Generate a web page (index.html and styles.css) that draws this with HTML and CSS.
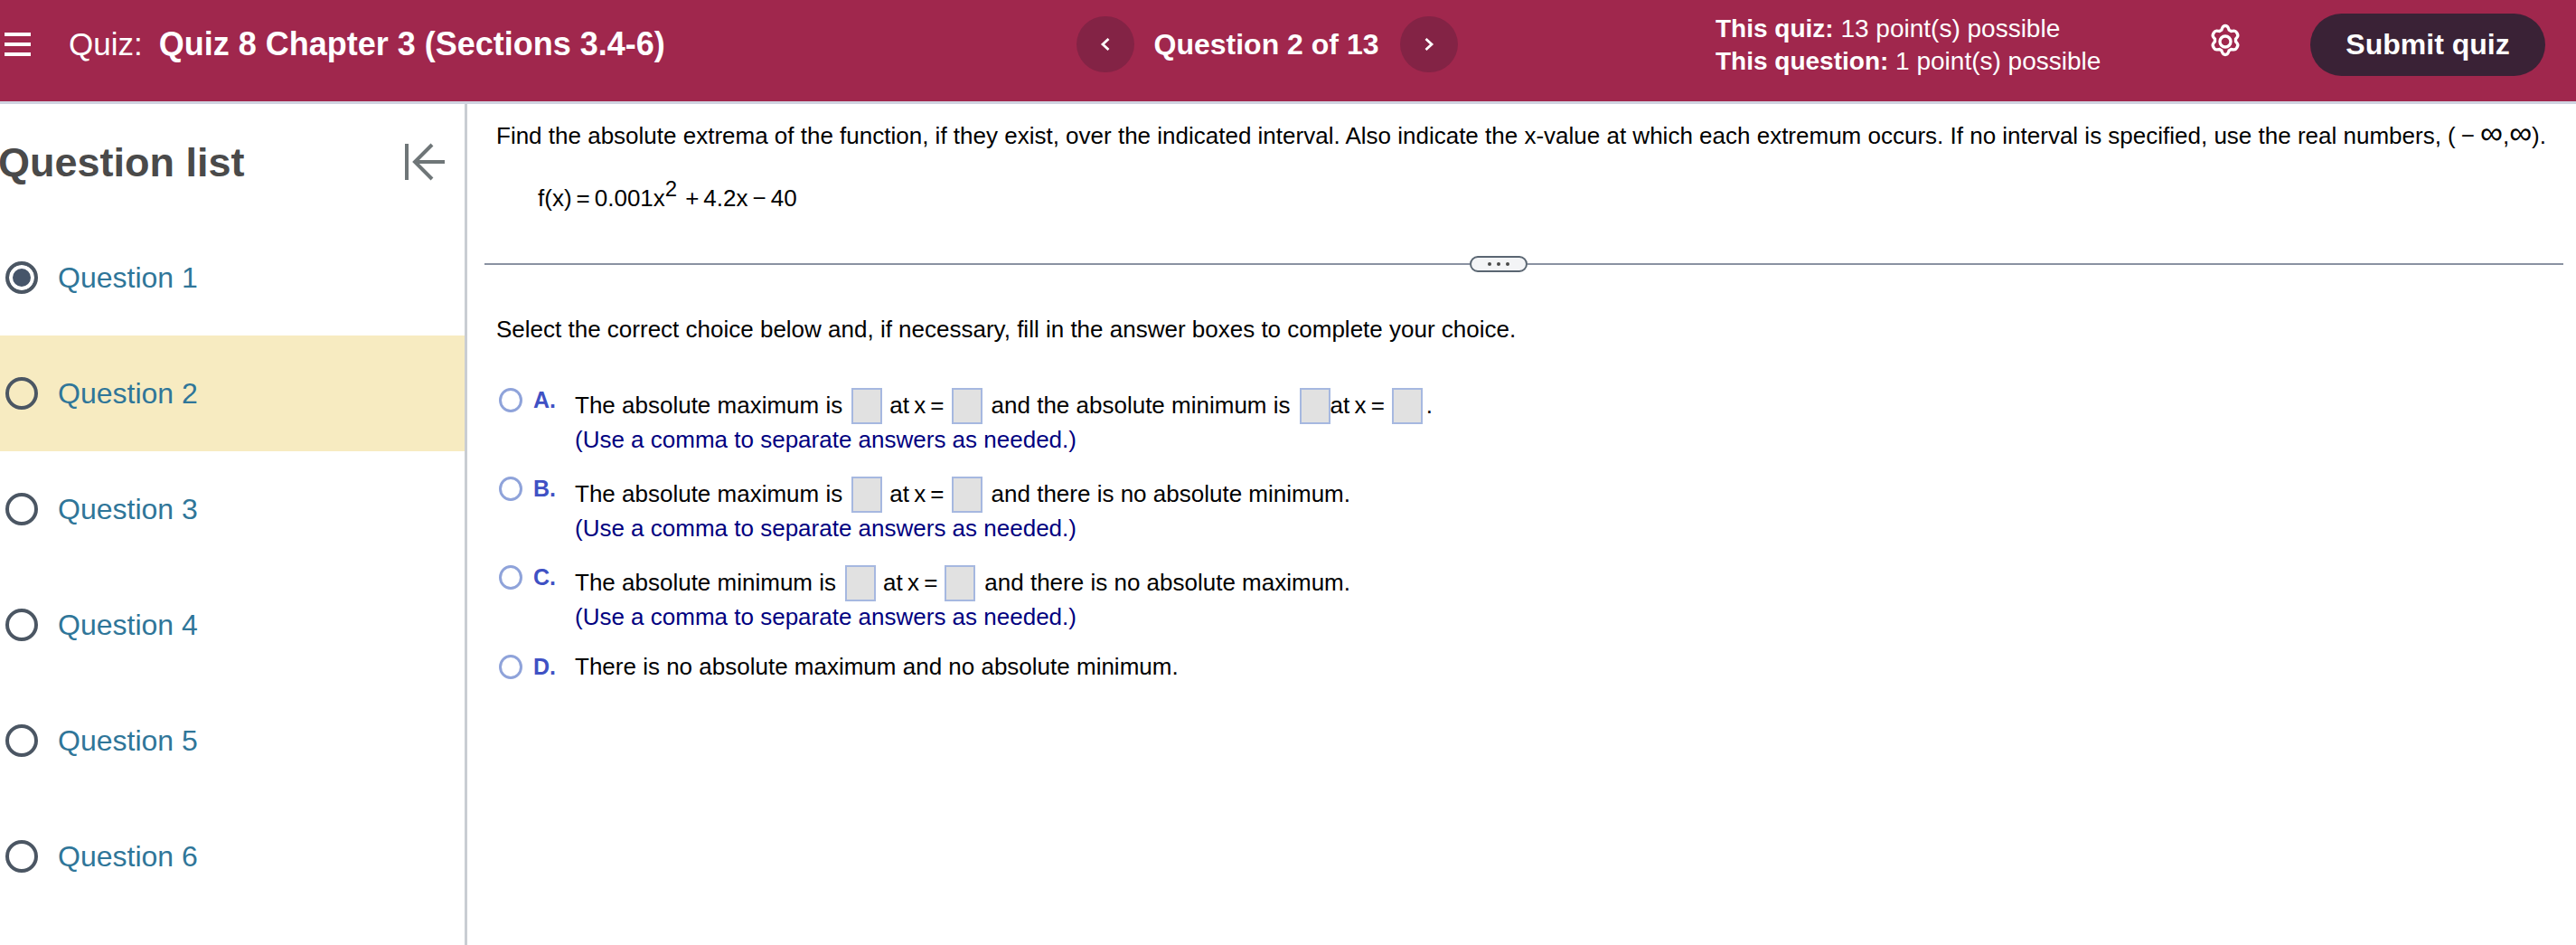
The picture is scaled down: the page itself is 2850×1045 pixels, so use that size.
FILE: index.html
```html
<!DOCTYPE html>
<html>
	<head>
		<meta charset="utf-8">
		<title>Quiz 8 Chapter 3</title>
		<link rel="stylesheet" href="styles.css">
	</head>
	<body>
		<header class="topbar">
			<div class="menu-icon"><span></span><span></span><span></span></div>
			<div class="quiz-title">Quiz:<b>Quiz 8 Chapter 3 (Sections 3.4-6)</b></div>
			<div class="pager">
				<span class="pager-btn">
					<svg width="14" height="18" viewBox="0 0 14 18"><path d="M10.5 3 4 9l6.5 6" fill="none" stroke="#fff" stroke-width="2.8"/></svg>
				</span>
				<span class="pager-text">Question 2 of 13</span>
				<span class="pager-btn">
					<svg width="14" height="18" viewBox="0 0 14 18"><path d="M3.5 3 10 9l-6.5 6" fill="none" stroke="#fff" stroke-width="2.8"/></svg>
				</span>
			</div>
			<div class="points">
				<div><b>This quiz:</b> 13 point(s) possible</div>
				<div><b>This question:</b> 1 point(s) possible</div>
			</div>
			<svg class="gear" width="40" height="40" viewBox="0 0 24 24" fill="none" stroke="#fff" stroke-width="2">
				<circle cx="12" cy="12" r="3.6"/>
				<path d="M12 1.5c1 0 1.6.5 2 1.5l.5 1.3 1.4.8 1.4-.2c1-.2 1.7.2 2.2 1l.5.9c.5.9.4 1.6-.2 2.4l-.9 1.1v1.6l.9 1.1c.6.8.7 1.5.2 2.4l-.5.9c-.5.8-1.2 1.2-2.2 1l-1.4-.2-1.4.8-.5 1.3c-.4 1-1 1.5-2 1.5s-1.6-.5-2-1.5l-.5-1.3-1.4-.8-1.4.2c-1 .2-1.7-.2-2.2-1l-.5-.9c-.5-.9-.4-1.6.2-2.4l.9-1.1v-1.6l-.9-1.1c-.6-.8-.7-1.5-.2-2.4l.5-.9c.5-.8 1.2-1.2 2.2-1l1.4.2 1.4-.8.5-1.3c.4-1 1-1.5 2-1.5z"/>
			</svg>
			<span class="submit-btn">Submit quiz</span>
		</header>

		<div class="content">
			<aside class="sidebar">
				<div class="sidebar-head">
					<h2>Question list</h2>
					<svg width="46" height="42" viewBox="0 0 46 42" fill="none" stroke="#6f7678" stroke-width="4">
						<path d="M3 1v40M45 21H12M31 2 12 21l19 19"/>
					</svg>
				</div>
				<ul class="question-list">
					<li><span class="dot dot-on"></span>Question 1</li>
					<li class="current"><span class="dot"></span>Question 2</li>
					<li><span class="dot"></span>Question 3</li>
					<li><span class="dot"></span>Question 4</li>
					<li><span class="dot"></span>Question 5</li>
					<li><span class="dot"></span>Question 6</li>
				</ul>
			</aside>

			<main class="main">
				<p class="line">Find the absolute extrema of the function, if they exist, over the indicated interval. Also indicate the x-value at which each extremum occurs. If no interval is specified, use the real numbers, <span class="interval">(<i>−</i><span class="inf">∞</span>,<span class="inf">∞</span>).</span></p>
				<p class="line formula">f(x)<i>=</i>0.001x<sup>2</sup><i>+</i>4.2x<i>−</i>40</p>

				<div class="divider">
					<span class="rule rule-left"></span>
					<span class="handle"><em></em><em></em><em></em></span>
					<span class="rule"></span>
				</div>

				<p class="line select">Select the correct choice below and, if necessary, fill in the answer boxes to complete your choice.</p>

				<div class="options">
					<div class="option">
						<span class="radio"></span><span class="letter">A.</span>
						<div>
							<div class="row">
								<span>The absolute maximum is</span><span class="box"></span><span class="atx">at x =</span><span class="box"></span><span>and the absolute minimum is</span><span class="box box-tight"></span><span class="atx">at x =</span><span class="box"></span><span class="stop">.</span>
							</div>
							<div class="hint">(Use a comma to separate answers as needed.)</div>
						</div>
					</div>
					<div class="option">
						<span class="radio"></span><span class="letter">B.</span>
						<div>
							<div class="row">
								<span>The absolute maximum is</span><span class="box"></span><span class="atx">at x =</span><span class="box"></span><span>and there is no absolute minimum.</span>
							</div>
							<div class="hint">(Use a comma to separate answers as needed.)</div>
						</div>
					</div>
					<div class="option">
						<span class="radio"></span><span class="letter">C.</span>
						<div>
							<div class="row">
								<span>The absolute minimum is</span><span class="box"></span><span class="atx">at x =</span><span class="box"></span><span>and there is no absolute maximum.</span>
							</div>
							<div class="hint">(Use a comma to separate answers as needed.)</div>
						</div>
					</div>
					<div class="option option-plain">
						<span class="radio"></span><span class="letter">D.</span>
						<div class="line">There is no absolute maximum and no absolute minimum.</div>
					</div>
				</div>
			</main>
		</div>
	</body>
</html>
```

FILE: styles.css
```css
*{
	margin: 0;
	padding: 0;
	box-sizing: border-box;
}

html, body{
	height: 100%;
	overflow: hidden;
}

body{
	font-family: "Liberation Sans", Arial, sans-serif;
	color: #000;
	background: #fff;
	display: flex;
	flex-direction: column;
}

/************ top bar ************/
.topbar{
	height: 115px;
	flex: none;
	display: flex;
	align-items: center;
	padding: 0 34px 14px 5px;
	background: #a0274d;
	border-bottom: 3px solid #cfd3e0;
	color: #fff;
}

.menu-icon{
	width: 29px;
	height: 26px;
	display: flex;
	flex-direction: column;
	justify-content: space-between;
}

.menu-icon span{
	height: 4px;
	background: #fff;
}

.quiz-title{
	margin-left: 42px;
	width: 1115px;
	font-size: 35px;
	white-space: nowrap;
}

.quiz-title b{
	margin-left: 18px;
	font-size: 36px;
}

.pager{
	width: 422px;
	display: flex;
	align-items: center;
	font-size: 32px;
	font-weight: bold;
}

.pager-text{
	margin: 0 24px 0 22px;
	white-space: nowrap;
}

.pager-btn{
	width: 64px;
	height: 62px;
	border-radius: 50%;
	background: #832345;
	display: flex;
	align-items: center;
	justify-content: center;
}

.points{
	margin: 2px 0 0 285px;
	width: 544px;
	font-size: 28px;
	line-height: 36px;
	white-space: nowrap;
}

.gear{
	flex: none;
	margin-bottom: 7px;
}

.submit-btn{
	margin-left: 74px;
	width: 260px;
	height: 69px;
	border-radius: 35px;
	background: #3a2236;
	font-size: 32px;
	font-weight: bold;
	display: flex;
	align-items: center;
	justify-content: center;
}

/************ page below the bar ************/
.content{
	flex: 1;
	display: flex;
	min-height: 0;
}

.sidebar{
	width: 517px;
	flex: none;
	border-right: 3px solid #c9cdd3;
}

.sidebar-head{
	height: 128px;
	display: flex;
	align-items: center;
	justify-content: space-between;
	padding-right: 21px;
}

.sidebar-head h2{
	margin: 2px 0 0 -2px;
	font-size: 45px;
	color: #4a4a4a;
}

.question-list{
	list-style: none;
}

.question-list li{
	height: 128px;
	display: flex;
	align-items: center;
	padding-left: 6px;
	font-size: 32px;
	color: #2f7699;
}

.question-list .current{
	background: #f7ebc1;
}

.dot{
	width: 36px;
	height: 36px;
	margin-right: 22px;
	border-radius: 50%;
	border: 4px solid #4b5663;
}

.dot-on{
	background: #46556a;
	box-shadow: inset 0 0 0 4px #fff;
}

/************ question ************/
.main{
	flex: 1;
	min-width: 0;
	padding: 17px 14px 0 32px;
}

.line{
	font-size: 26px;
	line-height: 36px;
	white-space: nowrap;
}

.interval i{
	font-style: normal;
	margin: 0 6px;
}

.inf{
	font-size: 35px;
	line-height: 0;
}

.formula{
	margin: 33px 0 0 46px;
}

.formula i{
	font-style: normal;
	margin: 0 5px;
}

.formula sup{
	font-size: 24px;
	line-height: 0;
	vertical-align: 11px;
	margin-right: 4px;
}

.divider{
	margin: 46px 0 0 -13px;
	height: 18px;
	display: flex;
	align-items: center;
}

.rule{
	flex: 1;
	height: 2px;
	background: #8a92a2;
}

.rule-left{
	flex: none;
	width: 1090px;
}

.handle{
	width: 64px;
	height: 18px;
	border: 2px solid #5a6672;
	border-radius: 9px;
	background: #f3f4f6;
	display: flex;
	align-items: center;
	justify-content: center;
	gap: 6px;
}

.handle em{
	width: 4px;
	height: 4px;
	border-radius: 50%;
	background: #4a4a4a;
}

.select{
	margin-top: 45px;
}

/************ answer choices ************/
.options{
	margin: 47px 0 0 3px;
	display: flex;
	flex-direction: column;
	gap: 18px;
}

.option{
	display: flex;
	align-items: flex-start;
	font-size: 26px;
}

.option-plain{
	align-items: center;
	margin-top: -4px;
}

.radio{
	width: 26px;
	height: 27px;
	margin-right: 12px;
	border-radius: 50%;
	border: 3px solid #8fa3da;
	background: #fff;
}

.letter{
	width: 46px;
	font-size: 25px;
	font-weight: bold;
	line-height: 26px;
	color: #3f51c4;
}

.row{
	height: 40px;
	display: flex;
	align-items: center;
	white-space: nowrap;
}

.row span{
	margin-bottom: 1px;
}

.row .atx{
	margin: 0 -2px 1px;
	word-spacing: -2px;
}

.row .box{
	width: 34px;
	height: 40px;
	margin: 0 10px;
	border: 2px solid #a6b8e0;
	background: #e1e1e1;
}

.row .box-tight{
	margin-right: 2px;
}

.stop{
	margin-left: -6px;
}

.hint{
	height: 40px;
	padding-bottom: 4px;
	line-height: 35px;
	color: #000080;
	white-space: nowrap;
}
```
